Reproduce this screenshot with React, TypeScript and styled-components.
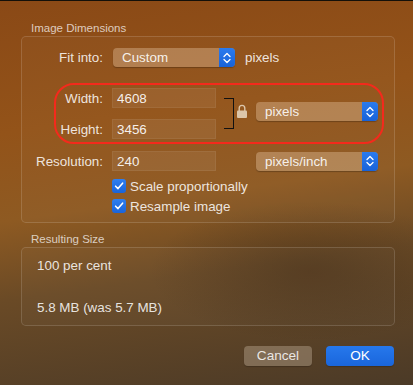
import React from 'react'
import styled, { createGlobalStyle } from 'styled-components'

const GlobalStyle = createGlobalStyle`
    html, body {
        margin: 0;
        padding: 0;
    }
    body {
        font-family: "Liberation Sans", Arial, sans-serif;
        -webkit-font-smoothing: antialiased;
    }
`

const Window = styled.div`
    width: 413px;
    height: 385px;
    box-sizing: border-box;
    border-top: 1px solid #141009;
    padding: 20px 18px 0 21px;
    background:
        radial-gradient(ellipse 160px 70px at 310px 270px, rgba(60, 40, 20, 0.45), rgba(60, 40, 20, 0) 100%),
        linear-gradient(172deg, #8a4916 0%, #935319 30%, #8e5a22 50%, #6a4a26 68%, #4b3a27 100%);
    color: rgba(255, 255, 255, 0.86);
    font-size: 13.4px;
`

const SectionTitle = styled.div`
    font-size: 11.5px;
    line-height: 14px;
    height: 14px;
    padding-left: 10px;
    color: rgba(255, 255, 255, 0.72);
    margin-top: ${(p: { $mt?: number }) => p.$mt ?? 0}px;
`

const GroupBox = styled.div<{ $pt: number; $pb: number }>`
    margin-top: 1px;
    width: 374px;
    box-sizing: border-box;
    border: 1px solid rgba(255, 255, 255, 0.14);
    border-radius: 5px;
    background: rgba(255, 255, 255, 0.025);
    padding: ${(p) => p.$pt}px 0 ${(p) => p.$pb}px 0;
    display: flex;
    flex-direction: column;
`

const Row = styled.div<{ $mt?: number; $h?: number }>`
    display: flex;
    align-items: center;
    height: ${(p) => p.$h ?? 20}px;
    margin-top: ${(p) => p.$mt ?? 0}px;
`

const Label = styled.div`
    width: 81px;
    text-align: right;
    margin-right: 9px;
    white-space: nowrap;
`

const Field = styled.div`
    width: 104px;
    height: 20px;
    box-sizing: border-box;
    padding-left: 4px;
    line-height: 20px;
    background: rgba(255, 255, 255, 0.07);
    border: 1px solid rgba(255, 255, 255, 0.06);
    color: rgba(255, 255, 255, 0.92);
`

const Popup = styled.div<{ $ml?: number }>`
    width: 122px;
    height: 19px;
    margin-left: ${(p) => p.$ml ?? 0}px;
    display: flex;
    border-radius: 4px;
    overflow: hidden;
    background: rgba(255, 230, 200, 0.3);
    box-shadow: 0 1px 1px rgba(0, 0, 0, 0.25);
    color: rgba(255, 255, 255, 0.9);
`

const PopupText = styled.div`
    flex: 1;
    padding-left: 9px;
    line-height: 19px;
    font-size: 13.4px;
`

const Stepper = styled.div`
    width: 16px;
    height: 19px;
    background: linear-gradient(#2a7bee, #1862d8);
    display: flex;
    align-items: center;
    justify-content: center;
`

const Unit = styled.div`
    margin-left: 10px;
`

const DimBlock = styled.div`
    position: relative;
    display: flex;
    margin-top: 21px;
`

const DimFields = styled.div`
    display: flex;
    flex-direction: column;
    gap: 11px;
`

const Bracket = styled.div`
    width: 10px;
    height: 31px;
    margin: 10px 0 0 8px;
    box-sizing: border-box;
    border: 1.5px solid #111;
    border-left: none;
`

const LockWrap = styled.div`
    margin: 16px 0 0 3px;
    width: 10px;
    height: 14px;
`

const DimPopupWrap = styled.div`
    margin: 14px 0 0 9px;
`

const Highlight = styled.div`
    position: absolute;
    left: 32px;
    top: -5px;
    width: 330px;
    height: 61px;
    box-sizing: border-box;
    border: 2px solid #f42a1c;
    border-radius: 20px;
    pointer-events: none;
`

const CheckRow = styled.div<{ $mt: number }>`
    display: flex;
    align-items: center;
    height: 14px;
    margin: ${(p) => p.$mt}px 0 0 90px;
    gap: 4px;
`

const Checkbox = styled.div`
    width: 14px;
    height: 14px;
    border-radius: 3px;
    background: linear-gradient(#2f7ff0, #1a64d9);
    display: flex;
    align-items: center;
    justify-content: center;
`

const ResultLine = styled.div<{ $mt?: number }>`
    padding-left: 15px;
    line-height: 14px;
    height: 14px;
    margin-top: ${(p) => p.$mt ?? 0}px;
`

const ButtonBar = styled.div`
    display: flex;
    justify-content: flex-end;
    gap: 14px;
    margin-top: 20px;
    padding-right: 1px;
`

const Button = styled.div<{ $primary?: boolean }>`
    width: 68px;
    height: 20px;
    line-height: 20px;
    text-align: center;
    border-radius: 4px;
    font-size: 13.6px;
    color: ${(p) => (p.$primary ? '#fff' : 'rgba(255,255,255,0.85)')};
    background: ${(p) => (p.$primary ? 'linear-gradient(#2678ec, #1a66dc)' : 'rgba(255, 240, 220, 0.26)')};
    box-shadow: 0 1px 1px rgba(0, 0, 0, 0.2);
`

function StepperIcon() {
    return (
        <svg width="8" height="12" viewBox="0 0 8 12">
            <polyline points="1,4.5 4,1.5 7,4.5" fill="none" stroke="#fff" strokeWidth="1.3" strokeLinecap="round" strokeLinejoin="round" />
            <polyline points="1,7.5 4,10.5 7,7.5" fill="none" stroke="#fff" strokeWidth="1.3" strokeLinecap="round" strokeLinejoin="round" />
        </svg>
    )
}

function PopupButton({ text, ml }: { text: string; ml?: number }) {
    return (
        <Popup $ml={ml}>
            <PopupText>{text}</PopupText>
            <Stepper><StepperIcon /></Stepper>
        </Popup>
    )
}

function LockIcon() {
    return (
        <svg width="10" height="14" viewBox="0 0 10 14">
            <path d="M2.2 7 V4.2 a2.8 2.8 0 0 1 5.6 0 V7" fill="none" stroke="#dcc6aa" strokeWidth="1.4" />
            <rect x="0" y="6.5" width="10" height="7.5" rx="1" fill="#dcc6aa" />
        </svg>
    )
}

function Check() {
    return (
        <svg width="10" height="10" viewBox="0 0 10 10">
            <polyline points="1.6,5.2 4,7.6 8.6,2.2" fill="none" stroke="#fff" strokeWidth="1.6" strokeLinecap="round" strokeLinejoin="round" />
        </svg>
    )
}

export default function App() {
    return (
        <>
            <GlobalStyle />
            <Window>
                <SectionTitle>Image Dimensions</SectionTitle>
                <GroupBox $pt={11} $pb={9}>
                    <Row $h={19}>
                        <Label>Fit into:</Label>
                        <PopupButton text="Custom" ml={1} />
                        <Unit>pixels</Unit>
                    </Row>
                    <DimBlock>
                        <DimFields>
                            <Row>
                                <Label>Width:</Label>
                                <Field>4608</Field>
                            </Row>
                            <Row>
                                <Label>Height:</Label>
                                <Field>3456</Field>
                            </Row>
                        </DimFields>
                        <Bracket />
                        <LockWrap><LockIcon /></LockWrap>
                        <DimPopupWrap><PopupButton text="pixels" /></DimPopupWrap>
                        <Highlight />
                    </DimBlock>
                    <Row $mt={12}>
                        <Label>Resolution:</Label>
                        <Field>240</Field>
                        <PopupButton text="pixels/inch" ml={40} />
                    </Row>
                    <CheckRow $mt={8}>
                        <Checkbox><Check /></Checkbox>
                        <span>Scale proportionally</span>
                    </CheckRow>
                    <CheckRow $mt={6}>
                        <Checkbox><Check /></Checkbox>
                        <span>Resample image</span>
                    </CheckRow>
                </GroupBox>
                <SectionTitle $mt={9}>Resulting Size</SectionTitle>
                <GroupBox $pt={11} $pb={10}>
                    <ResultLine>100 per cent</ResultLine>
                    <ResultLine $mt={28}>5.8 MB (was 5.7 MB)</ResultLine>
                </GroupBox>
                <ButtonBar>
                    <Button>Cancel</Button>
                    <Button $primary>OK</Button>
                </ButtonBar>
            </Window>
        </>
    )
}
